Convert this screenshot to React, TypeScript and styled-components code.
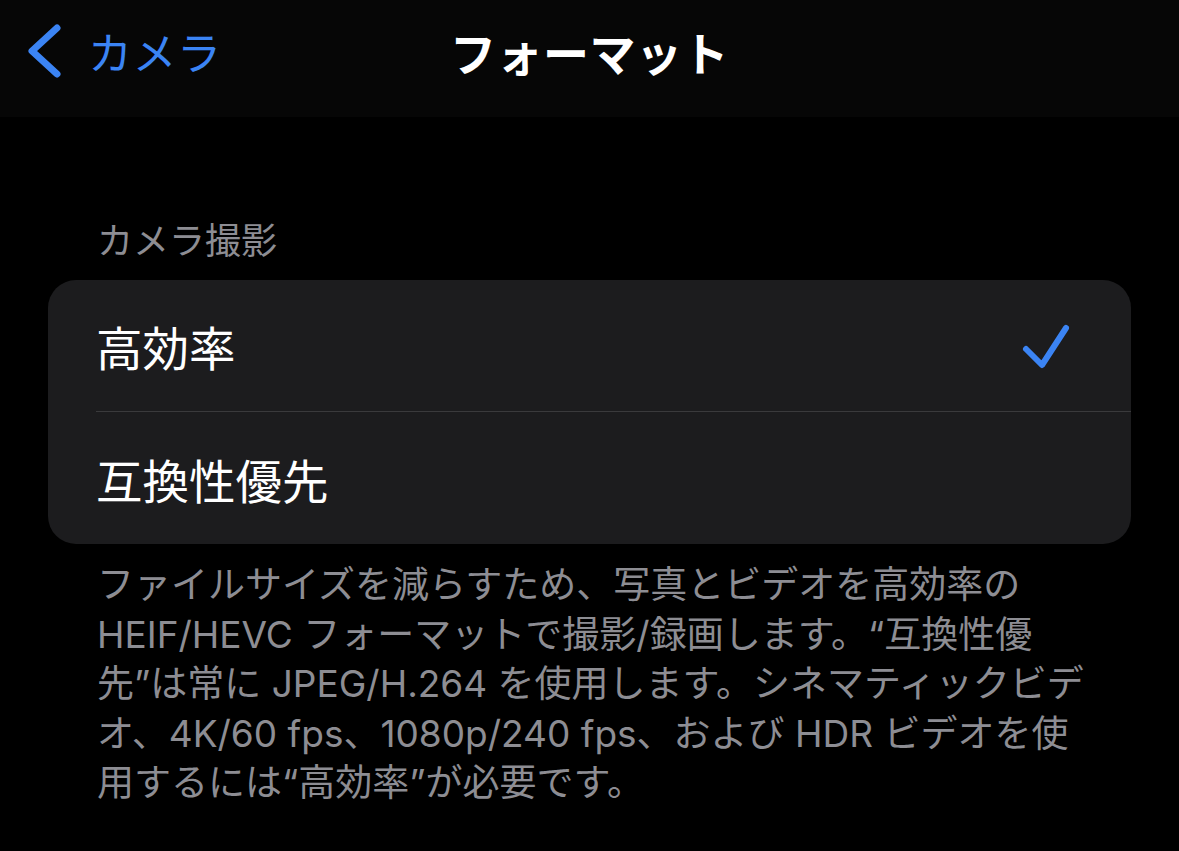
import React from "react";
import styled, { createGlobalStyle } from "styled-components";

const GlobalStyle = createGlobalStyle`
  body {
    margin: 0;
    background: #000;
    font-family: Inter, "Noto Sans CJK JP", sans-serif;
    -webkit-font-smoothing: antialiased;
  }
`;

const Page = styled.div`
  width: 1179px;
  min-height: 851px;
  background: #000;
  overflow: hidden;
`;

const NavBar = styled.header`
  height: 117px;
  background: #060606;
  display: grid;
  grid-template-columns: 1fr auto 1fr;
  align-items: start;
`;

const BackButton = styled.div`
  height: 102px;
  display: flex;
  align-items: center;
  gap: 26px;
  padding-left: 28px;
  color: #3b84f4;
  font-family: "Noto Sans CJK JP", sans-serif;
  font-size: 44px;
  letter-spacing: 0.5px;
`;

const Title = styled.h1`
  margin: 0;
  height: 102px;
  display: flex;
  align-items: center;
  color: #fff;
  font-family: "Noto Sans CJK JP", sans-serif;
  font-weight: 700;
  font-size: 46px;
  letter-spacing: 0.5px;
`;

const Content = styled.main`
  padding: 0 48px;
`;

const SectionLabel = styled.div`
  margin-top: 96px;
  padding-left: 49px;
  height: 50px;
  line-height: 50px;
  color: #8d8d93;
  font-family: "Noto Sans CJK JP", sans-serif;
  font-size: 36px;
`;

const Card = styled.div`
  margin-top: 17px;
  background: #1c1c1e;
  border-radius: 28px;
  overflow: hidden;
`;

const Row = styled.div`
  padding-left: 48px;
  display: flex;
`;

const RowInner = styled.div<{ $divider?: boolean }>`
  flex: 1;
  height: ${({ $divider }) => ($divider ? "131px" : "132px")};
  display: flex;
  align-items: center;
  justify-content: space-between;
  padding-right: 60px;
  border-bottom: ${({ $divider }) => ($divider ? "1px solid #3a3a3c" : "none")};
`;

const RowLabel = styled.span`
  color: #fff;
  font-family: "Noto Sans CJK JP", sans-serif;
  font-size: 46.5px;
`;

const Footer = styled.p`
  margin: 16px 0 0;
  padding-left: 49px;
  color: #8d8d93;
  font-size: 37px;
  line-height: 49.5px;
`;

const Line = styled.span`
  display: block;
  white-space: nowrap;
`;

const Chevron = () => (
  <svg width="34" height="54" viewBox="0 0 34 54">
    <polyline
      points="29,4 4,27 29,50"
      fill="none"
      stroke="#3b84f4"
      strokeWidth="7"
      strokeLinecap="round"
      strokeLinejoin="round"
    />
  </svg>
);

const Check = () => (
  <svg width="50" height="50" viewBox="0 0 50 50">
    <polyline
      points="5,28 21,44 45,7"
      fill="none"
      stroke="#3b84f4"
      strokeWidth="6"
      strokeLinecap="round"
      strokeLinejoin="round"
    />
  </svg>
);

const options = [
  { label: "高効率", selected: true },
  { label: "互換性優先", selected: false },
];

const footerLines = [
  "ファイルサイズを減らすため、写真とビデオを高効率の",
  "HEIF/HEVC フォーマットで撮影/録画します。“互換性優",
  "先”は常に JPEG/H.264 を使用します。シネマティックビデ",
  "オ、4K/60 fps、1080p/240 fps、および HDR ビデオを使",
  "用するには“高効率”が必要です。",
];

const App = (): JSX.Element => {
  return (
    <>
      <GlobalStyle />
      <Page>
        <NavBar>
          <BackButton>
            <Chevron />
            <span>カメラ</span>
          </BackButton>
          <Title>フォーマット</Title>
          <div />
        </NavBar>
        <Content>
          <SectionLabel>カメラ撮影</SectionLabel>
          <Card>
            {options.map((o, i) => (
              <Row key={o.label}>
                <RowInner $divider={i < options.length - 1}>
                  <RowLabel>{o.label}</RowLabel>
                  {o.selected && <Check />}
                </RowInner>
              </Row>
            ))}
          </Card>
          <Footer>
            {footerLines.map((l) => (
              <Line key={l}>{l}</Line>
            ))}
          </Footer>
        </Content>
      </Page>
    </>
  );
};

export default App;
